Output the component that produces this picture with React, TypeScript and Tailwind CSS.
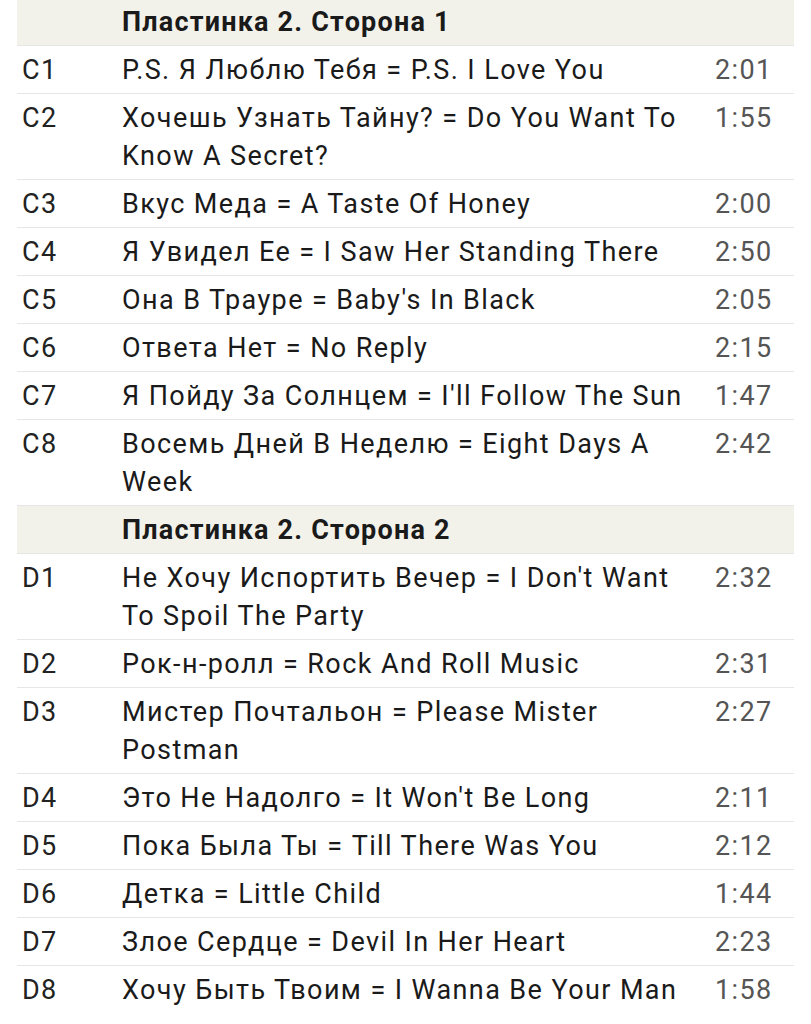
import React from 'react';

type Row = { code: string; title: string; time: string };

const sides: { name: string; rows: Row[] }[] = [
  {
    name: 'Пластинка 2. Сторона 1',
    rows: [
      { code: 'C1', title: 'P.S. Я Люблю Тебя = P.S. I Love You', time: '2:01' },
      { code: 'C2', title: 'Хочешь Узнать Тайну? = Do You Want To Know A Secret?', time: '1:55' },
      { code: 'C3', title: 'Вкус Меда = A Taste Of Honey', time: '2:00' },
      { code: 'C4', title: 'Я Увидел Ее = I Saw Her Standing There', time: '2:50' },
      { code: 'C5', title: "Она В Трауре = Baby's In Black", time: '2:05' },
      { code: 'C6', title: 'Ответа Нет = No Reply', time: '2:15' },
      { code: 'C7', title: "Я Пойду За Солнцем = I'll Follow The Sun", time: '1:47' },
      { code: 'C8', title: 'Восемь Дней В Неделю = Eight Days A Week', time: '2:42' },
    ],
  },
  {
    name: 'Пластинка 2. Сторона 2',
    rows: [
      { code: 'D1', title: "Не Хочу Испортить Вечер = I Don't Want To Spoil The Party", time: '2:32' },
      { code: 'D2', title: 'Рок-н-ролл = Rock And Roll Music', time: '2:31' },
      { code: 'D3', title: 'Мистер Почтальон = Please Mister Postman', time: '2:27' },
      { code: 'D4', title: "Это Не Надолго = It Won't Be Long", time: '2:11' },
      { code: 'D5', title: 'Пока Была Ты = Till There Was You', time: '2:12' },
      { code: 'D6', title: 'Детка = Little Child', time: '1:44' },
      { code: 'D7', title: 'Злое Сердце = Devil In Her Heart', time: '2:23' },
      { code: 'D8', title: 'Хочу Быть Твоим = I Wanna Be Your Man', time: '1:58' },
    ],
  },
];

const App: React.FC = () => {
  return (
    <div
      className="min-h-screen bg-white overflow-hidden"
      style={{ fontFamily: 'Roboto, "Noto Sans", sans-serif' }}
    >
      <div className="ml-[17px] w-[777px] -mt-[2px] text-[27px] leading-[38px] tracking-[1.4px]">
        {sides.map((side, si) => (
          <div key={side.name}>
            <div className="flex bg-[#f3f2ea] border-b border-[#e6e6e6] pt-[5px] pb-[4px]">
              <div className="w-[100px]" />
              <div className="pl-[5px] font-bold text-[#1a1a1a] tracking-[1.2px]">{side.name}</div>
            </div>
            {side.rows.map((row, ri) => (
              <div
                key={row.code}
                className={
                  si === sides.length - 1 && ri === side.rows.length - 1
                    ? 'flex pt-[5px] pb-[5px]'
                    : 'flex border-b border-[#e6e6e6] pt-[5px] pb-[4px]'
                }
              >
                <div className="w-[100px] shrink-0 pl-[5px] text-[#222]">{row.code}</div>
                <div className="flex-1 px-[5px] text-[#1a1a1a]">{row.title}</div>
                <div className="w-[84px] shrink-0 pl-[5px] text-[#555]">{row.time}</div>
              </div>
            ))}
          </div>
        ))}
      </div>
    </div>
  );
};

export default App;
